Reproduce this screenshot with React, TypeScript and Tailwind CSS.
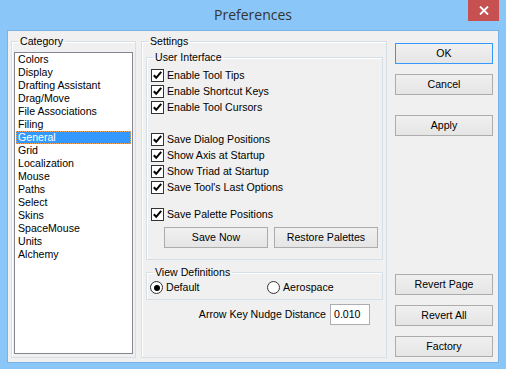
import React from "react";

const categories = [
  "Colors",
  "Display",
  "Drafting Assistant",
  "Drag/Move",
  "File Associations",
  "Filing",
  "General",
  "Grid",
  "Localization",
  "Mouse",
  "Paths",
  "Select",
  "Skins",
  "SpaceMouse",
  "Units",
  "Alchemy",
];

function Legend({ children }: { children: React.ReactNode }) {
  return (
    <legend className="ml-[6px] px-[2px] leading-[13px] h-[13px] text-black">
      {children}
    </legend>
  );
}

function Check({ label }: { label: string }) {
  return (
    <div className="flex items-center h-[16px]">
      <span className="w-[13px] h-[13px] border border-[#333333] bg-white flex items-center justify-center shrink-0">
        <svg width="11" height="11" viewBox="0 0 11 11">
          <path
            d="M1.8 5.2 L4.2 7.8 L9.2 1.8"
            stroke="#000"
            strokeWidth="2"
            fill="none"
          />
        </svg>
      </span>
      <span className="ml-[3px] leading-[13px]">{label}</span>
    </div>
  );
}

function Radio({ label, checked }: { label: string; checked?: boolean }) {
  return (
    <div className="flex items-center h-[17px]">
      <span className="w-[13px] h-[13px] rounded-full border border-[#333333] bg-white flex items-center justify-center shrink-0">
        {checked && <span className="w-[6px] h-[6px] rounded-full bg-black" />}
      </span>
      <span className="ml-[3px] leading-[13px]">{label}</span>
    </div>
  );
}

function Btn({
  children,
  className = "",
  primary,
}: {
  children: React.ReactNode;
  className?: string;
  primary?: boolean;
}) {
  return (
    <div
      className={
        "h-[21px] flex items-center justify-center bg-gradient-to-b from-[#f0f0f0] to-[#e5e5e5] border text-black leading-[13px] " +
        (primary ? "border-[#3399ff] " : "border-[#acacac] ") +
        className
      }
    >
      {children}
    </div>
  );
}

export default function App() {
  return (
    <div className="w-[506px] h-[369px] bg-[#8ac6f7] flex flex-col font-['Liberation_Sans',Arial,sans-serif] text-[10.6px] text-black">
      {/* Title bar */}
      <div className="h-[30px] grid grid-cols-[1fr_auto_1fr] items-start">
        <div />
        <div className="pt-[5px] text-[14px] leading-[19px] text-[#333333] font-['Open_Sans','Noto_Sans',sans-serif]">
          Preferences
        </div>
        <div className="justify-self-end mr-[7px] w-[31px] h-[21px] bg-[#c75050] flex items-center justify-center">
          <svg width="10" height="9" viewBox="0 0 10 9">
            <path d="M1 0.5 L9 8.5 M9 0.5 L1 8.5" stroke="#fff" strokeWidth="1.8" fill="none" />
          </svg>
        </div>
      </div>

      {/* Client */}
      <div className="mx-[7px] h-[333px] border border-[#7ab2e6] bg-[#f0f0f0] flex items-start pl-[3px]">
        {/* Category */}
        <fieldset className="mt-[4px] w-[125px] h-[323px] border border-[#d5dfe5] shadow-[inset_1px_1px_0_#ffffff]">
          <Legend>Category</Legend>
          <div className="mt-[4px] ml-[2px] w-[119px] h-[302px] border border-[#828790] bg-white">
            {categories.map((c) =>
              c === "General" ? (
                <div
                  key={c}
                  className="mx-[1px] h-[13px] leading-[11px] pl-[1px] bg-[#3399ff] text-white border border-dotted border-[#f5a55a]"
                >
                  {c}
                </div>
              ) : (
                <div key={c} className="mx-[1px] h-[13px] leading-[13px] pl-[2px]">
                  {c}
                </div>
              )
            )}
          </div>
        </fieldset>

        {/* Settings */}
        <fieldset className="ml-[5px] mt-[4px] w-[246px] h-[323px] border border-[#d5dfe5] shadow-[inset_1px_1px_0_#ffffff]">
          <Legend>Settings</Legend>
          <fieldset className="ml-[4px] mt-[3px] w-[237px] h-[209px] border border-[#d5dfe5] shadow-[inset_1px_1px_0_#ffffff]">
            <Legend>User Interface</Legend>
            <div className="pl-[4px] pt-[3px] flex flex-col">
              <Check label="Enable Tool Tips" />
              <Check label="Enable Shortcut Keys" />
              <Check label="Enable Tool Cursors" />
              <div className="h-[16px]" />
              <Check label="Save Dialog Positions" />
              <Check label="Show Axis at Startup" />
              <Check label="Show Triad at Startup" />
              <Check label="Save Tool's Last Options" />
              <div className="h-[11px]" />
              <Check label="Save Palette Positions" />
              <div className="mt-[5px] ml-[13px] flex gap-[6px]">
                <Btn className="w-[104px]">Save Now</Btn>
                <Btn className="w-[104px]">Restore Palettes</Btn>
              </div>
            </div>
          </fieldset>
          <fieldset className="ml-[4px] mt-[6px] w-[237px] h-[34px] border border-[#d5dfe5] shadow-[inset_1px_1px_0_#ffffff]">
            <Legend>View Definitions</Legend>
            <div className="pl-[3px] flex">
              <div className="w-[117px]">
                <Radio label="Default" checked />
              </div>
              <Radio label="Aerospace" />
            </div>
          </fieldset>
          <div className="mt-[4px] flex items-center justify-end pr-[16px] gap-[4px]">
            <span className="leading-[13px]">Arrow Key Nudge Distance</span>
            <div className="w-[40px] h-[21px] border border-[#abadb3] bg-white flex items-center pl-[3px] leading-[13px]">
              0.010
            </div>
          </div>
        </fieldset>

        {/* Buttons */}
        <div className="ml-[8px] w-[98px] h-full pt-[12px] pb-[5px] flex flex-col">
          <Btn primary>OK</Btn>
          <Btn className="mt-[10px]">Cancel</Btn>
          <Btn className="mt-[20px]">Apply</Btn>
          <div className="flex-1" />
          <Btn>Revert Page</Btn>
          <Btn className="mt-[10px]">Revert All</Btn>
          <Btn className="mt-[10px]">Factory</Btn>
        </div>
      </div>
    </div>
  );
}
